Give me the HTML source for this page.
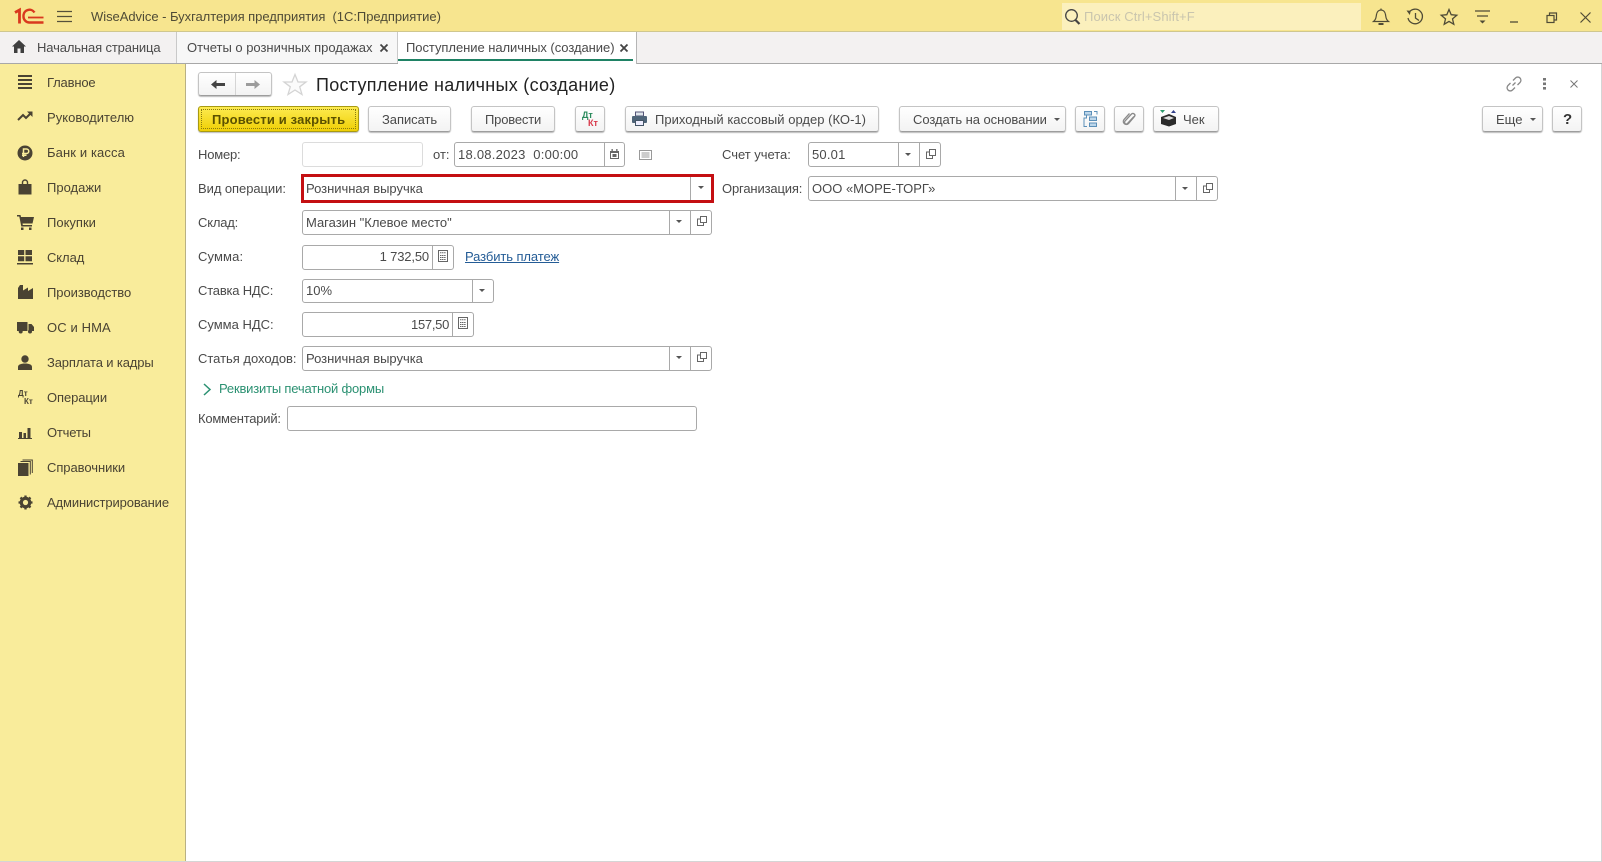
<!DOCTYPE html>
<html lang="ru"><head><meta charset="utf-8"><title>Поступление наличных (создание)</title>
<style>
html,body{margin:0;padding:0;width:1602px;height:862px;overflow:hidden;background:#fff}
body{position:relative;font-family:"Liberation Sans",Arial,sans-serif;font-size:13px;color:#4a4a4a}
.a{position:absolute}
.t{position:absolute;line-height:16px;white-space:pre}
.s{position:absolute;overflow:visible}
.btn{position:absolute;top:106px;height:26px;box-sizing:border-box;border:1px solid #c4c4c4;border-bottom:1px solid #9d9d9d;border-radius:3px;background:linear-gradient(#fff,#f3f3f3);box-shadow:0 1px 1px #bbb}
.f{position:absolute;box-sizing:border-box;border:1px solid #a9a9a9;border-radius:3px;background:#fff}
.d{position:absolute;width:1px;background:#a9a9a9}
.nav{color:#4a4333}
</style></head><body>
<!-- title bar -->
<div class="a" style="left:0;top:0;width:1602px;height:32px;background:#f7e58f;border-bottom:1px solid #cfc78f;box-sizing:border-box"></div>
<svg class="s" style="left:14px;top:8px" width="30" height="16" viewBox="0 0 30 16" fill="none" stroke="#d9381e">
<path d="M1 4.500L5.500 2V15.500" stroke-width="2.800"/><path d="M20.500 4.500A6 6 0 0 0 9.500 7V9A6 6 0 0 0 15 14.500H29.500" stroke-width="2.400"/><path d="M14 9.500H29.500" stroke-width="1.800"/></svg>
<svg class="s" style="left:57px;top:10px" width="15" height="13" stroke="#55503a" stroke-width="1.200"><path d="M0 1.500H15M0 6.500H15M0 11.500H15"/></svg>
<div class="t" style="left:91px;top:9px;color:#4f4b36;letter-spacing:-.04px">WiseAdvice - Бухгалтерия предприятия  (1С:Предприятие)</div>
<div class="a" style="left:1062px;top:3px;width:299px;height:27px;background:#fbf0bd"></div>
<svg class="s" style="left:1064px;top:8px" width="17" height="18" fill="none" stroke="#444"><circle cx="7.500" cy="7.500" r="5.800" stroke-width="1.300"/><path d="M11.500 12L15.500 16" stroke-width="2.200"/></svg>
<div class="t" style="left:1084px;top:9px;color:#c9c5ae;letter-spacing:.1px">Поиск Ctrl+Shift+F</div>
<svg class="s" style="left:1372px;top:8px" width="18" height="18" fill="none" stroke="#4f4b36" stroke-width="1.200"><path d="M1.500 13.500C4 11.500 4 9.500 4.500 6.500C5 3.500 7 2 9 2C11 2 13 3.500 13.500 6.500C14 9.500 14 11.500 16.500 13.500Z"/><path d="M9 .5V2"/><path d="M6.500 16H11.500" stroke-width="2"/></svg>
<svg class="s" style="left:1406px;top:8px" width="18" height="18" fill="none" stroke="#4f4b36" stroke-width="1.300"><path d="M3 4.500A7.300 7.300 0 1 1 2 10"/><path d="M.5 2.500L4.800 2.800L3.800 7Z" fill="#4f4b36" stroke="none"/><path d="M9.500 5V10L13 12.500"/></svg>
<svg class="s" style="left:1440px;top:8px" width="18" height="18" fill="none" stroke="#4f4b36" stroke-width="1.300"><path d="M9 1.500L11.200 6.700L16.800 7.200L12.500 10.900L13.800 16.300L9 13.400L4.200 16.300L5.500 10.900L1.200 7.200L6.800 6.700Z"/></svg>
<svg class="s" style="left:1475px;top:10px" width="16" height="15" fill="none" stroke="#4f4b36" stroke-width="1.200"><path d="M0 1H15M2 6H13"/><path d="M4.500 10.500H10.500L7.500 13.500Z" fill="#4f4b36" stroke="none"/></svg>
<svg class="s" style="left:1509px;top:20px" width="10" height="4" stroke="#4f4b36" stroke-width="1.300"><path d="M1 2H9"/></svg>
<svg class="s" style="left:1546px;top:12px" width="12" height="12" fill="none" stroke="#4f4b36" stroke-width="1.200"><rect x="1" y="3.500" width="7" height="7"/><path d="M3.500 3.500V1H10.500V8H8"/></svg>
<svg class="s" style="left:1580px;top:12px" width="11" height="11" stroke="#4f4b36" stroke-width="1.200"><path d="M.5 .5L10.500 10.500M10.500 .5L.5 10.500"/></svg>

<!-- tabs -->
<div class="a" style="left:0;top:32px;width:1602px;height:32px;background:#f3f1f1;border-bottom:1px solid #a8a8a8;box-sizing:border-box"></div>
<div class="a" style="left:176px;top:32px;width:1px;height:31px;background:#c9c9c9"></div>
<div class="a" style="left:177px;top:32px;width:220px;height:31px;background:#f7f7f7"></div>
<div class="a" style="left:397px;top:32px;width:1px;height:31px;background:#c9c9c9"></div>
<div class="a" style="left:398px;top:32px;width:238px;height:32px;background:#fff"></div>
<div class="a" style="left:636px;top:32px;width:1px;height:32px;background:#b5b5b5"></div>
<div class="a" style="left:398px;top:59px;width:235px;height:2px;background:#1f8265"></div>
<svg class="s" style="left:12px;top:40px" width="14" height="13" fill="#3f3f3f"><path d="M7 0L14 6.500H12V13H8.500V8.500H5.500V13H2V6.500H0Z"/></svg>
<div class="t" style="left:37px;top:40px;letter-spacing:-.13px">Начальная страница</div>
<div class="t" style="left:187px;top:40px;letter-spacing:-.02px">Отчеты о розничных продажах</div>
<svg class="s" style="left:380px;top:44px" width="8" height="8" stroke="#444" stroke-width="1.800"><path d="M.5 .5L7.500 7.500M7.500 .5L.5 7.500"/></svg>
<div class="t" style="left:406px;top:40px;letter-spacing:-.05px">Поступление наличных (создание)</div>
<svg class="s" style="left:620px;top:44px" width="8" height="8" stroke="#444" stroke-width="1.800"><path d="M.5 .5L7.500 7.500M7.500 .5L.5 7.500"/></svg>

<!-- sidebar -->
<div class="a" style="left:0;top:64px;width:186px;height:798px;background:#f9ec9b;border-right:1px solid #b9b184;box-sizing:border-box"></div>
<div class="a" style="left:0;top:861px;width:1602px;height:1px;background:#d5d5d5"></div>
<div class="a" style="left:1601px;top:64px;width:1px;height:798px;background:#d5d5d5"></div>
<div class="t nav" style="left:47px;top:75px;letter-spacing:-.17px">Главное</div>
<div class="t nav" style="left:47px;top:110px;letter-spacing:.03px">Руководителю</div>
<div class="t nav" style="left:47px;top:145px;letter-spacing:.12px">Банк и касса</div>
<div class="t nav" style="left:47px;top:180px">Продажи</div>
<div class="t nav" style="left:47px;top:215px">Покупки</div>
<div class="t nav" style="left:47px;top:250px;letter-spacing:-.08px">Склад</div>
<div class="t nav" style="left:47px;top:285px;letter-spacing:-.05px">Производство</div>
<div class="t nav" style="left:47px;top:320px;letter-spacing:.12px">ОС и НМА</div>
<div class="t nav" style="left:47px;top:355px;letter-spacing:-.14px">Зарплата и кадры</div>
<div class="t nav" style="left:47px;top:390px;letter-spacing:-.1px">Операции</div>
<div class="t nav" style="left:47px;top:425px;letter-spacing:-.2px">Отчеты</div>
<div class="t nav" style="left:47px;top:460px;letter-spacing:-.06px">Справочники</div>
<div class="t nav" style="left:47px;top:495px;letter-spacing:-.12px">Администрирование</div>
<svg class="s" style="left:17px;top:74px" width="16" height="15" fill="#4a4333"><path d="M1 1H15V3H1ZM1 5H15V7H1ZM1 9H15V11H1ZM1 13H15V15H1Z"/></svg>
<svg class="s" style="left:17px;top:110px" width="16" height="12" fill="none" stroke="#4a4333" stroke-width="2"><path d="M1 10L6 5L9 8L14 3"/><path d="M10 1.500H15.500V7" stroke="none" fill="#4a4333"/></svg>
<svg class="s" style="left:17px;top:145px" width="16" height="16"><circle cx="8" cy="8" r="7.500" fill="#4a4333"/><path d="M6.500 12V4H9.500A2 2 0 0 1 9.500 8.500H5M5 10.300H9.500" fill="none" stroke="#f9ec9b" stroke-width="1.500"/></svg>
<svg class="s" style="left:18px;top:179px" width="14" height="16" fill="#4a4333"><path d="M.5 5H13.500V15.500H.5Z"/><path d="M4.500 7V3.500A2.500 2.500 0 0 1 9.500 3.500V7" fill="none" stroke="#4a4333" stroke-width="1.400"/></svg>
<svg class="s" style="left:17px;top:215px" width="17" height="15" fill="#4a4333"><path d="M0 0H3.500L4 2H17L15.500 8.500H5.500L5.800 10H15V11.500H4.300L2.300 1.500H0Z"/><rect x="4" y="12.500" width="2.500" height="2.500"/><rect x="12" y="12.500" width="2.500" height="2.500"/></svg>
<svg class="s" style="left:17px;top:250px" width="16" height="15" fill="#4a4333"><path d="M1 0H7.200V5H1ZM8.500 0H15V5H8.500ZM1 6.200H7.200V11.200H1ZM8.500 6.200H15V11.200H8.500ZM0 13H16V14.500H0Z"/></svg>
<svg class="s" style="left:18px;top:285px" width="15" height="14" fill="#4a4333"><path d="M0 14V3L2 0H5V5.500L10 2.500V6L15 3V14Z"/></svg>
<svg class="s" style="left:17px;top:321px" width="17" height="13" fill="#4a4333"><path d="M0 1H10.500V10H0ZM11.500 3H14.500L17 6V10H11.500Z"/><circle cx="3.700" cy="10.500" r="2"/><circle cx="13" cy="10.500" r="2"/></svg>
<svg class="s" style="left:18px;top:355px" width="14" height="15" fill="#4a4333"><circle cx="7" cy="4" r="3.700"/><path d="M0 15V12C0 9.500 3 8.500 7 8.500C11 8.500 14 9.500 14 12V15Z"/></svg>
<div class="a" style="left:18px;top:389px;font:bold 8px/9px 'Liberation Sans',sans-serif;color:#4a4333">Дт</div>
<div class="a" style="left:24px;top:397px;font:bold 8px/9px 'Liberation Sans',sans-serif;color:#4a4333">Кт</div>
<svg class="s" style="left:18px;top:427px" width="14" height="12" fill="#4a4333"><path d="M1 5H4V11H1ZM5.500 6H8V11H5.500ZM9.500 1H12.500V11H9.500ZM0 11H14V12H0Z"/></svg>
<svg class="s" style="left:18px;top:460px" width="15" height="16" fill="#4a4333"><rect x="0" y="3" width="10.500" height="13"/><path d="M2.500 1.500H12.300V14.500M4.500 0H14.300V13" fill="none" stroke="#4a4333" stroke-width="1"/></svg>
<svg class="s" style="left:18px;top:495px" width="15" height="15"><circle cx="7.500" cy="7.500" r="4.500" fill="none" stroke="#4a4333" stroke-width="2.600"/><path d="M7.500 .5V14.500M.5 7.500H14.500M2.500 2.500L12.500 12.500M12.500 2.500L2.500 12.500" stroke="#4a4333" stroke-width="2.300"/><circle cx="7.500" cy="7.500" r="2.600" fill="#f9ec9b"/></svg>

<!-- form header -->
<div class="btn" style="left:198px;top:72px;width:74px;height:24px"></div>
<div class="a" style="left:235px;top:73px;width:1px;height:22px;background:#d5d5d5"></div>
<svg class="s" style="left:211px;top:80px" width="14" height="9" fill="#444"><path d="M0 4.500L5.500 0V3H14V6H5.500V9Z"/></svg>
<svg class="s" style="left:246px;top:80px" width="14" height="9" fill="#9c9c9c"><path d="M14 4.500L8.500 0V3H0V6H8.500V9Z"/></svg>
<svg class="s" style="left:283px;top:73px" width="24" height="23" fill="#fbfbfb" stroke="#d4d4d4" stroke-width="1.300"><path d="M12 1.500L15 9H23L16.700 13.800L19 21.500L12 17L5 21.500L7.300 13.800L1 9H9Z"/></svg>
<div class="t" style="left:316px;top:73px;font-size:18px;line-height:24px;color:#222;letter-spacing:.28px">Поступление наличных (создание)</div>
<svg class="s" style="left:1506px;top:76px" width="16" height="16" fill="none" stroke="#888" stroke-width="1.300"><path d="M6.500 9.500L9.500 6.500M7 4.500L9.500 2A3 3 0 0 1 14 6.500L11.500 9M9 11.500L6.500 14A3 3 0 0 1 2 9.500L4.500 7"/></svg>
<svg class="s" style="left:1543px;top:78px" width="3" height="12" fill="#777"><rect width="3" height="2.600"/><rect y="4.500" width="3" height="2.600"/><rect y="9" width="3" height="2.600"/></svg>
<svg class="s" style="left:1570px;top:80px" width="8" height="8" stroke="#777" stroke-width="1"><path d="M.5 .5L7.500 7.500M7.500 .5L.5 7.500"/></svg>

<!-- command bar -->
<div class="btn" style="left:198px;width:161px;height:26px;background:linear-gradient(#fdeb50,#efcf05);border:1px solid #a89a10;box-shadow:0 1px 1px #bbb"></div>
<div class="a" style="left:201px;top:109px;width:155px;height:20px;box-sizing:border-box;border:1px dotted #8a7c10"></div>
<div class="t" style="left:212px;top:112px;font-weight:bold;color:#5b5100;letter-spacing:.16px">Провести и закрыть</div>
<div class="btn" style="left:368px;width:83px"></div><div class="t" style="left:382px;top:112px;letter-spacing:-.05px">Записать</div>
<div class="btn" style="left:471px;width:84px"></div><div class="t" style="left:485px;top:112px;letter-spacing:-.18px">Провести</div>
<div class="btn" style="left:575px;width:30px"></div>
<div class="a" style="left:582px;top:111px;font:bold 9px/9px 'Liberation Sans',sans-serif;color:#2a8a5c">Дт</div>
<div class="a" style="left:588px;top:119px;font:bold 9px/9px 'Liberation Sans',sans-serif;color:#d8384a">Кт</div>
<div class="btn" style="left:625px;width:254px"></div>
<svg class="s" style="left:632px;top:112px" width="15" height="14"><path d="M3.500 0H11.500V4H3.500Z" fill="#dfe6ec" stroke="#557" stroke-width="1"/><rect x="0" y="4" width="15" height="7" rx="1" fill="#4e6478"/><rect x="3.500" y="8.500" width="8" height="5" fill="#eef" stroke="#456"/></svg>
<div class="t" style="left:655px;top:112px;letter-spacing:.02px">Приходный кассовый ордер (КО-1)</div>
<div class="btn" style="left:899px;width:167px"></div><div class="t" style="left:913px;top:112px;letter-spacing:-.05px">Создать на основании</div>
<svg class="s" style="left:1054px;top:118px" width="6" height="3" fill="#555"><path d="M0 0H6L3 3Z"/></svg>
<div class="btn" style="left:1075px;width:30px"></div>
<svg class="s" style="left:1083px;top:111px" width="15" height="16" fill="none" stroke="#5b8fb8" stroke-width="1"><rect x="1.500" y=".5" width="7" height="3.500" fill="#bcd6ea"/><rect x="6.500" y="6" width="7" height="3.500" fill="#bcd6ea"/><rect x="6.500" y="12" width="7" height="3.500" fill="#bcd6ea"/><path d="M11 .5H14V3.500M3.500 4V7H1V15.500H4"/></svg>
<div class="btn" style="left:1114px;width:30px"></div>
<svg class="s" style="left:1121px;top:111px" width="16" height="16" fill="none" stroke="#8a8a8a" stroke-width="1.300"><path d="M13 5.500L6.500 12.500C5 14 2.500 12 4 10L10.500 3C12 1.500 15 3.500 13.500 5.500L7.500 12.500C5 15 .5 12 3 8.500L8.500 2.500"/></svg>
<div class="btn" style="left:1153px;width:66px"></div>
<svg class="s" style="left:1160px;top:110px" width="17" height="17"><path d="M1 7L9 4L16 7V14L9 16.500L1 14Z" fill="#2b2b2b"/><path d="M3 8L9 6L14 8L9 10Z" fill="#ddd"/><path d="M0 0H5L2.500 3Z" fill="#2a9a6a"/><path d="M11 3H16L13.500 0Z" fill="#33408a"/></svg>
<div class="t" style="left:1183px;top:112px">Чек</div>
<div class="btn" style="left:1482px;width:61px"></div><div class="t" style="left:1496px;top:112px">Еще</div>
<svg class="s" style="left:1530px;top:118px" width="6" height="3" fill="#555"><path d="M0 0H6L3 3Z"/></svg>
<div class="btn" style="left:1552px;width:30px"></div><div class="t" style="left:1563px;top:112px;font-weight:bold;font-size:15px;color:#333">?</div>

<!-- form labels -->
<div class="t" style="left:198px;top:147px;letter-spacing:-.2px">Номер:</div>
<div class="t" style="left:198px;top:181px;letter-spacing:-.06px">Вид операции:</div>
<div class="t" style="left:198px;top:215px;letter-spacing:-.2px">Склад:</div>
<div class="t" style="left:198px;top:249px;letter-spacing:.12px">Сумма:</div>
<div class="t" style="left:198px;top:283px;letter-spacing:-.2px">Ставка НДС:</div>
<div class="t" style="left:198px;top:317px">Сумма НДС:</div>
<div class="t" style="left:198px;top:351px;letter-spacing:-.02px">Статья доходов:</div>
<div class="t" style="left:198px;top:411px;letter-spacing:-.23px">Комментарий:</div>
<div class="t" style="left:433px;top:147px">от:</div>
<div class="t" style="left:722px;top:147px;letter-spacing:-.03px">Счет учета:</div>
<div class="t" style="left:722px;top:181px;letter-spacing:-.15px">Организация:</div>

<!-- fields -->
<div class="f" style="left:302px;top:142px;width:121px;height:25px;border-color:#dcdcdc"></div>
<div class="f" style="left:454px;top:142px;width:171px;height:25px"></div><div class="d" style="left:604px;top:142px;height:25px"></div>
<div class="t" style="left:458px;top:147px;letter-spacing:.25px">18.08.2023  0:00:00</div>
<svg class="s" style="left:610px;top:149px" width="9" height="10" fill="#666"><path d="M0 2H9V10H0ZM1 4V9H8V4Z"/><rect x="1.500" y="0" width="1.300" height="3"/><rect x="6.200" y="0" width="1.300" height="3"/><rect x="2.500" y="5" width="4" height="3"/></svg>
<svg class="s" style="left:639px;top:150px" width="13" height="10" fill="none" stroke="#999"><rect x=".5" y=".5" width="12" height="9"/><path d="M2.500 3H10.500M2.500 5H10.500M2.500 7H10.500"/></svg>

<div class="a" style="left:301px;top:174px;width:413px;height:29px;box-sizing:border-box;border:3px solid #c40f12"></div>
<div class="d" style="left:690px;top:177px;height:23px"></div>
<div class="t" style="left:306px;top:181px;letter-spacing:-.02px">Розничная выручка</div>
<svg class="s" style="left:698px;top:186px" width="6" height="3" fill="#555"><path d="M0 0H6L3 3Z"/></svg>

<div class="f" style="left:302px;top:210px;width:410px;height:25px"></div><div class="d" style="left:669px;top:210px;height:25px"></div><div class="d" style="left:690px;top:210px;height:25px"></div>
<div class="t" style="left:306px;top:215px;letter-spacing:-.01px">Магазин "Клевое место"</div>
<svg class="s" style="left:676px;top:220px" width="6" height="3" fill="#555"><path d="M0 0H6L3 3Z"/></svg>
<svg class="s" style="left:697px;top:216px" width="10" height="10" fill="none" stroke="#666"><rect x="3.500" y=".5" width="6" height="6"/><path d="M3.500 3H.5V9.500H6.500V6.500"/></svg>

<div class="f" style="left:302px;top:245px;width:152px;height:25px"></div><div class="d" style="left:432px;top:245px;height:25px"></div>
<div class="t" style="left:370px;top:249px;width:59px;text-align:right;letter-spacing:-.15px">1 732,50</div>
<svg class="s" style="left:438px;top:250px" width="10" height="12" fill="none" stroke="#666"><rect x=".5" y=".5" width="9" height="11"/><path d="M2 2.800H8M2 5.500H8M2 7.500H8M2 9.500H8" stroke-dasharray="1.300 .5"/></svg>
<div class="t" style="left:465px;top:249px;color:#245c96;text-decoration:underline;letter-spacing:-.09px">Разбить платеж</div>

<div class="f" style="left:302px;top:279px;width:192px;height:24px"></div><div class="d" style="left:472px;top:279px;height:24px"></div>
<div class="t" style="left:306px;top:283px">10%</div>
<svg class="s" style="left:479px;top:289px" width="6" height="3" fill="#555"><path d="M0 0H6L3 3Z"/></svg>

<div class="f" style="left:302px;top:312px;width:172px;height:25px"></div><div class="d" style="left:452px;top:312px;height:25px"></div>
<div class="t" style="left:390px;top:317px;width:59px;text-align:right;letter-spacing:-.3px">157,50</div>
<svg class="s" style="left:458px;top:317px" width="10" height="12" fill="none" stroke="#666"><rect x=".5" y=".5" width="9" height="11"/><path d="M2 2.800H8M2 5.500H8M2 7.500H8M2 9.500H8" stroke-dasharray="1.300 .5"/></svg>

<div class="f" style="left:302px;top:346px;width:410px;height:25px"></div><div class="d" style="left:669px;top:346px;height:25px"></div><div class="d" style="left:690px;top:346px;height:25px"></div>
<div class="t" style="left:306px;top:351px;letter-spacing:-.02px">Розничная выручка</div>
<svg class="s" style="left:676px;top:356px" width="6" height="3" fill="#555"><path d="M0 0H6L3 3Z"/></svg>
<svg class="s" style="left:697px;top:352px" width="10" height="10" fill="none" stroke="#666"><rect x="3.500" y=".5" width="6" height="6"/><path d="M3.500 3H.5V9.500H6.500V6.500"/></svg>

<svg class="s" style="left:203px;top:383px" width="8" height="13" fill="none" stroke="#2b9172" stroke-width="1.500"><path d="M1 1L7 6.500L1 12"/></svg>
<div class="t" style="left:219px;top:381px;color:#2b9172;letter-spacing:-.19px">Реквизиты печатной формы</div>

<div class="f" style="left:287px;top:406px;width:410px;height:25px"></div>

<div class="f" style="left:808px;top:142px;width:133px;height:25px"></div><div class="d" style="left:898px;top:142px;height:25px"></div><div class="d" style="left:919px;top:142px;height:25px"></div>
<div class="t" style="left:812px;top:147px;letter-spacing:.2px">50.01</div>
<svg class="s" style="left:905px;top:153px" width="6" height="3" fill="#555"><path d="M0 0H6L3 3Z"/></svg>
<svg class="s" style="left:926px;top:149px" width="10" height="10" fill="none" stroke="#666"><rect x="3.500" y=".5" width="6" height="6"/><path d="M3.500 3H.5V9.500H6.500V6.500"/></svg>

<div class="f" style="left:808px;top:176px;width:410px;height:25px"></div><div class="d" style="left:1175px;top:176px;height:25px"></div><div class="d" style="left:1196px;top:176px;height:25px"></div>
<div class="t" style="left:812px;top:181px">ООО «МОРЕ-ТОРГ»</div>
<svg class="s" style="left:1182px;top:187px" width="6" height="3" fill="#555"><path d="M0 0H6L3 3Z"/></svg>
<svg class="s" style="left:1203px;top:183px" width="10" height="10" fill="none" stroke="#666"><rect x="3.500" y=".5" width="6" height="6"/><path d="M3.500 3H.5V9.500H6.500V6.500"/></svg>
</body></html>
